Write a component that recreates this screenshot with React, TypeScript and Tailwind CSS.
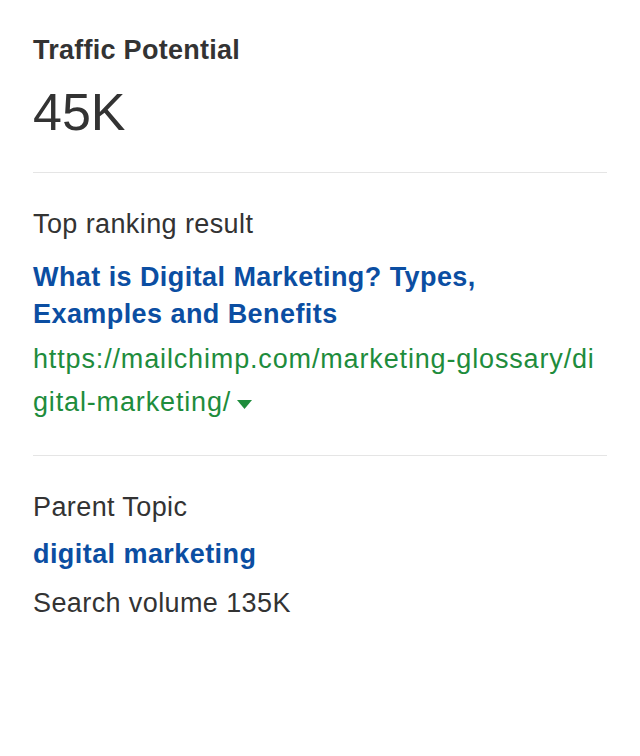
export default function App() {
  return (
    <div
      className="w-[640px] h-[756px] bg-white px-[33px] text-[#333333]"
      style={{ fontFamily: '"Liberation Sans", Arial, Helvetica, sans-serif' }}
    >
      <div className="pt-[35px] text-[27px] leading-[30px] font-bold tracking-[0.26px]">Traffic Potential</div>
      <div className="mt-[17px] text-[52px] leading-[60px]">45K</div>
      <div className="mt-[30px] h-px w-[574px] bg-[#e5e5e5]" />
      <div className="mt-[36px] text-[27px] leading-[30px] tracking-[0.4px]">Top ranking result</div>
      <div className="mt-[20px] text-[27px] leading-[37px] font-bold text-[#0b4ea2] tracking-[0.43px]">
        What is Digital Marketing? Types,
        <br />
        Examples and Benefits
      </div>
      <div className="mt-[5px] text-[27px] leading-[43px] text-[#1e8c3c] whitespace-nowrap tracking-[0.85px]">
        <div>https://mailchimp.com/marketing-glossary/di</div>
        <div className="flex items-center">
          <span>gital-marketing/</span>
          <svg width="15" height="9" viewBox="0 0 15 9" className="ml-[6px] mt-[4px]">
            <path d="M0 0 L15 0 L7.5 9 Z" fill="#1e8c3c" />
          </svg>
        </div>
      </div>
      <div className="mt-[31px] h-px w-[574px] bg-[#e5e5e5]" />
      <div className="mt-[36px] text-[27px] leading-[30px] tracking-[0.4px]">Parent Topic</div>
      <div className="mt-[17px] text-[27px] leading-[30px] font-bold text-[#0b4ea2] tracking-[0.43px]">digital marketing</div>
      <div className="mt-[19px] text-[27px] leading-[30px] tracking-[0.4px]">Search volume 135K</div>
    </div>
  );
}
